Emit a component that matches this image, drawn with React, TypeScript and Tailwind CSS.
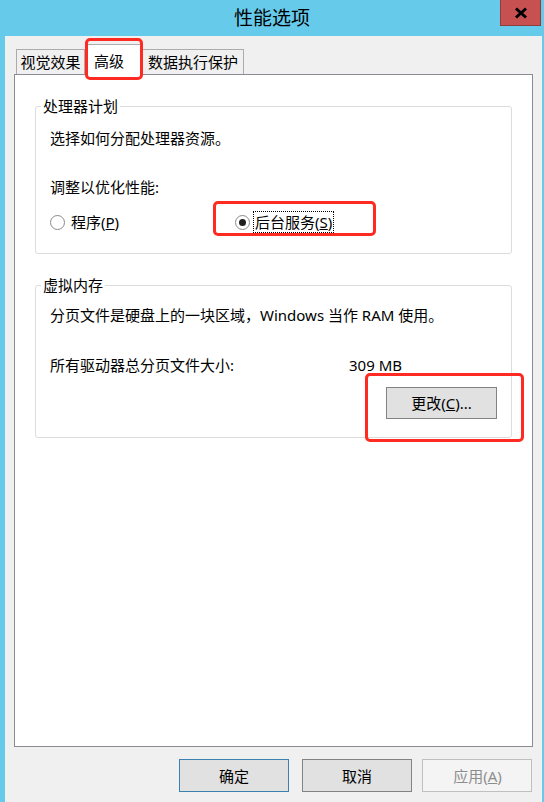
const font = { fontFamily: '"Noto Sans", "Noto Sans CJK SC", sans-serif' };

function Radio({ checked }: { checked?: boolean }) {
  return (
    <span className="flex h-[15px] w-[15px] shrink-0 items-center justify-center rounded-full border border-[#8a8a8a] bg-white">
      {checked && <span className="h-[7px] w-[7px] rounded-full bg-[#1f1f1f]" />}
    </span>
  );
}

function Group({ title, children }: { title: string; children: React.ReactNode }) {
  return (
    <fieldset className="mx-[20px] rounded-[3px] border border-[#dcdcdc]">
      <legend className="ml-[5px] px-[2px] text-[15px] leading-[20px]">{title}</legend>
      <div className="px-[14px]">{children}</div>
    </fieldset>
  );
}

function Btn({ children, variant }: { children: React.ReactNode; variant?: "default" | "disabled" }) {
  const cls =
    variant === "default"
      ? "border-[#3c7fb1] bg-[#e1e1e1] text-black"
      : variant === "disabled"
        ? "border-[#bfbfbf] bg-[#f4f4f4] text-[#8d8d8d]"
        : "border-[#838383] bg-[#e1e1e1] text-black";
  return (
    <div className={`flex h-[33px] w-[110px] items-center justify-center border text-[15px] leading-[20px] ${cls}`}>
      {children}
    </div>
  );
}

export default function App() {
  return (
    <div className="relative flex h-[802px] w-[544px] flex-col overflow-hidden bg-[#66caea] text-black" style={font}>
      {/* title bar */}
      <div className="relative flex h-[36px] items-center justify-center">
        <span className="text-[19px] leading-[24px]">性能选项</span>
        <div className="absolute right-[3px] top-0 flex h-[26px] w-[41px] items-center justify-center border border-t-0 border-[#8e3c3c] bg-[#c75050]">
          <svg width="14" height="12" viewBox="0 0 14 12">
            <path d="M2 1.5 L12 10.5 M12 1.5 L2 10.5" stroke="#000" strokeWidth="3" />
          </svg>
        </div>
      </div>

      {/* client area */}
      <div className="ml-[5px] mr-[2px] flex flex-1 flex-col bg-[#f0f0f0] px-[9px]">
        {/* tabs */}
        <div className="relative z-10 ml-[2px] flex h-[38px] items-end text-[15px] leading-[20px]">
          <div className="flex h-[25px] w-[69px] items-center justify-center border border-b-0 border-[#acacac]">
            视觉效果
          </div>
          <div className="-mb-px flex h-[31px] w-[58px] items-center justify-center border border-b-0 border-[#acacac] bg-white pr-[10px] pt-[2px]">
            高级
          </div>
          <div className="flex h-[25px] w-[101px] items-center justify-center border border-b-0 border-l-0 border-[#acacac]">
            数据执行保护
          </div>
        </div>

        {/* panel */}
        <div className="h-[673px] border border-[#898c95] bg-white pt-[21px] text-[15px] leading-[20px]">
          <Group title="处理器计划">
            <div className="pb-[21px] pt-[12px]">
              <div>选择如何分配处理器资源。</div>
              <div className="mt-[29px]">调整以优化性能:</div>
              <div className="mt-[15px] flex h-[20px] items-center">
                <div className="flex w-[185px] items-center gap-[6px]">
                  <Radio />
                  <span>
                    程序(<span className="underline">P</span>)
                  </span>
                </div>
                <div className="flex items-center gap-[3px]">
                  <Radio checked />
                  <span className="border border-dotted border-black px-[1px] leading-[20px]">
                    后台服务(<span className="underline">S</span>)
                  </span>
                </div>
              </div>
            </div>
          </Group>

          <div className="h-[21px]" />

          <Group title="虚拟内存">
            <div className="flex flex-col pb-[18px] pt-[10px]">
              <div>分页文件是硬盘上的一块区域，Windows 当作 RAM 使用。</div>
              <div className="mt-[30px] flex">
                <span className="w-[299px]">所有驱动器总分页文件大小:</span>
                <span>309 MB</span>
              </div>
              <div className="mt-[12px] flex h-[32px] w-[111px] items-center justify-center self-end border border-[#838383] bg-[#e1e1e1]">
                更改(<span className="underline">C</span>)...
              </div>
            </div>
          </Group>
        </div>

        {/* dialog buttons */}
        <div className="mt-[12px] flex justify-end">
          <Btn variant="default">确定</Btn>
          <div className="ml-[13px]">
            <Btn>取消</Btn>
          </div>
          <div className="ml-[10px] w-[111px]">
            <Btn variant="disabled">
              <span className="-mr-[1px]">
                应用(<span className="underline">A</span>)
              </span>
            </Btn>
          </div>
        </div>
      </div>

      {/* red annotation boxes */}
      <div className="pointer-events-none absolute left-[85px] top-[38px] z-20 h-[42px] w-[58px] rounded-[5px] border-[3px] border-[#ff2b22]" />
      <div className="pointer-events-none absolute left-[213px] top-[201px] z-20 h-[35px] w-[163px] rounded-[5px] border-[3px] border-[#ff2b22]" />
      <div className="pointer-events-none absolute left-[365px] top-[373px] z-20 h-[69px] w-[159px] rounded-[5px] border-[3px] border-[#ff2b22]" />
    </div>
  );
}
